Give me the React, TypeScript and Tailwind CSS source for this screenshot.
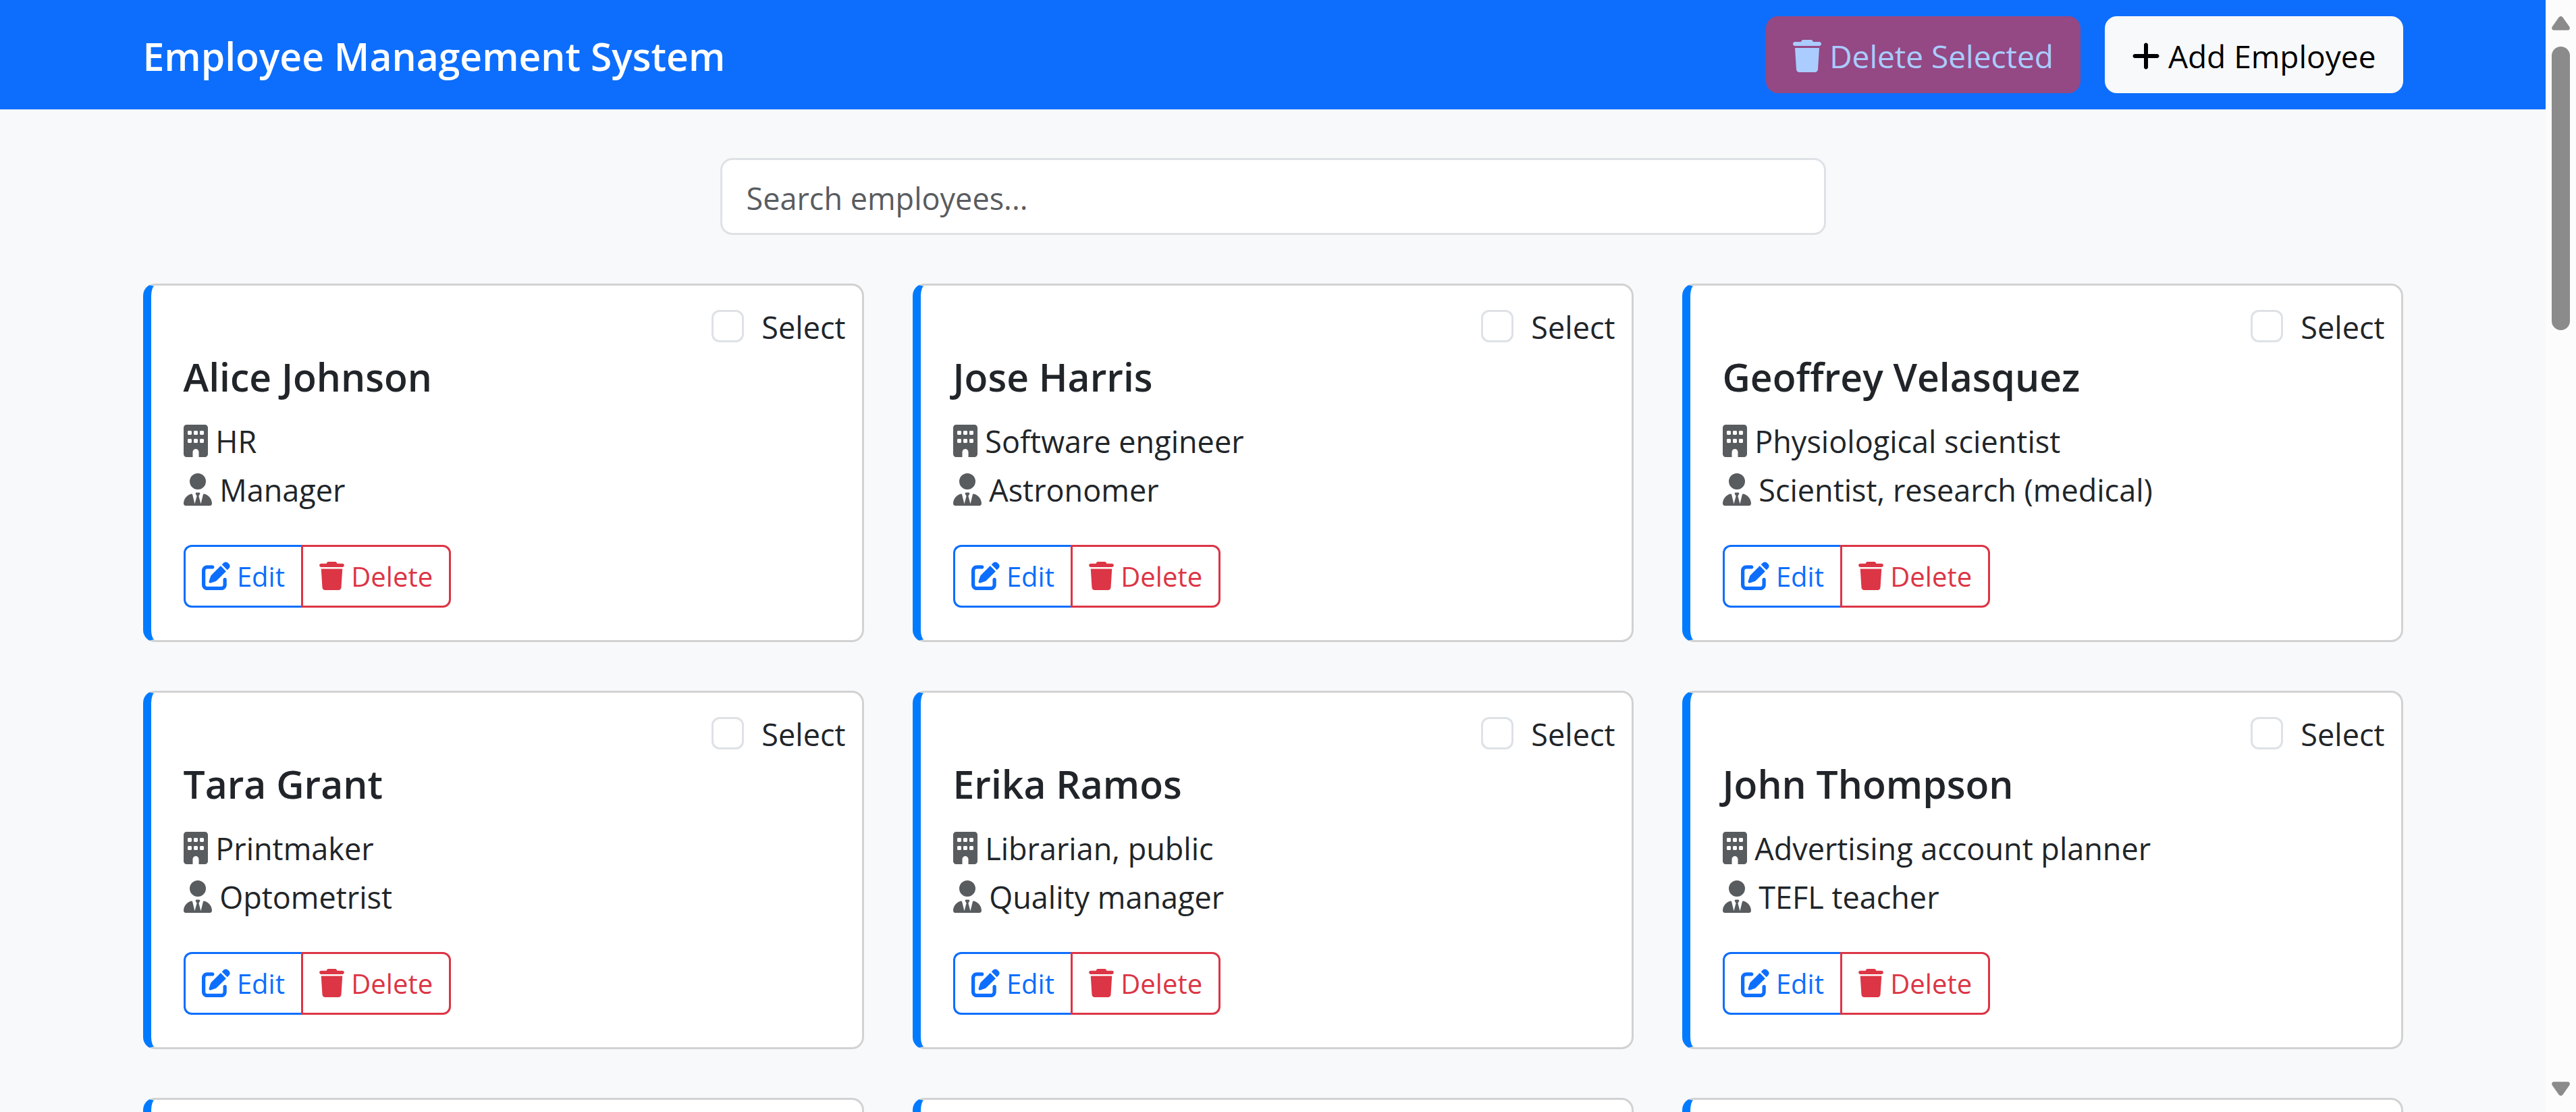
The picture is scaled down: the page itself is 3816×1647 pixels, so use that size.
import { useState } from "react";
import { FaBuilding, FaPenToSquare, FaPlus, FaTrash, FaUserTie } from "react-icons/fa6";

type Employee = { name: string; department: string; position: string };

const employees: Employee[] = [
  { name: "Alice Johnson", department: "HR", position: "Manager" },
  { name: "Jose Harris", department: "Software engineer", position: "Astronomer" },
  { name: "Geoffrey Velasquez", department: "Physiological scientist", position: "Scientist, research (medical)" },
  { name: "Tara Grant", department: "Printmaker", position: "Optometrist" },
  { name: "Erika Ramos", department: "Librarian, public", position: "Quality manager" },
  { name: "John Thompson", department: "Advertising account planner", position: "TEFL teacher" },
];

const cardFrame = "rounded-[18px] border-[3px] border-l-[12px] border-[#d2d2d2] border-l-[#007bff] bg-white";

function EmployeeCard({ employee, id }: { employee: Employee; id: number }) {
  return (
    <article className={`${cardFrame} pt-6 pb-12`}>
      <div className="flex h-[72px] items-start justify-end gap-[26px] pr-6">
        <input
          id={`select-${id}`}
          type="checkbox"
          className="mt-3 size-12 appearance-none rounded-xl border-[3px] border-[#dee2e6] bg-white checked:border-[#0d6efd] checked:bg-[#0d6efd]"
        />
        <label htmlFor={`select-${id}`} className="leading-[76px]">
          Select
        </label>
      </div>
      <div className="px-12 pt-[3px]">
        <h2 className="mb-6 text-[57px] leading-[72px] font-semibold">{employee.name}</h2>
        <p className="leading-[72px]">
          <FaBuilding className="inline-block h-12 w-9 align-[-6px] text-[#595c5f]" /> {employee.department}
        </p>
        <p className="mb-[45px] leading-[72px]">
          <FaUserTie className="inline-block h-12 w-[42px] align-[-6px] text-[#595c5f]" /> {employee.position}
        </p>
        <div className="flex text-[40px] leading-[63px]">
          <button
            type="button"
            className="rounded-l-xl border-[3px] border-r-0 border-[#0d6efd] px-6 py-3 text-[#0d6efd]"
          >
            <FaPenToSquare className="inline-block size-[42px] align-[-5px]" /> Edit
          </button>
          <button type="button" className="rounded-r-xl border-[3px] border-[#dc3545] px-6 py-3 text-[#dc3545]">
            <FaTrash className="inline-block h-[42px] w-[37px] align-[-5px]" /> Delete
          </button>
        </div>
      </div>
    </article>
  );
}

function Scrollbar() {
  return (
    <aside className="flex w-[45px] shrink-0 flex-col items-center bg-[#fcfcfc] py-6" aria-label="Scroll bar">
      <button type="button" aria-label="Scroll up">
        <svg className="h-[21px] w-[27px]" viewBox="0 0 27 21" fill="#8b8b8b">
          <path d="M10.5 1.8Q13.5 -1.6 16.5 1.8L26.2 15.5Q28.3 20.4 23.5 20.8H3.5Q-1.3 20.4 0.8 15.5Z" />
        </svg>
      </button>
      <div className="mt-6 h-[420px] w-[27px] rounded-full bg-[#8b8b8b]" />
      <button type="button" aria-label="Scroll down" className="mt-auto">
        <svg className="h-[21px] w-[27px] rotate-180" viewBox="0 0 27 21" fill="#8b8b8b">
          <path d="M10.5 1.8Q13.5 -1.6 16.5 1.8L26.2 15.5Q28.3 20.4 23.5 20.8H3.5Q-1.3 20.4 0.8 15.5Z" />
        </svg>
      </button>
    </aside>
  );
}

export default function App() {
  const [query, setQuery] = useState("");
  const shown = employees.filter((e) => e.name.toLowerCase().includes(query.toLowerCase()));

  return (
    <div className="flex h-screen overflow-hidden bg-[#f8f9fa] font-['Open_Sans','Noto_Sans',sans-serif] text-[45px] text-[#212529]">
      <div className="min-w-0 flex-1 overflow-hidden">
        <header className="bg-[#0d6efd] py-6">
          <div className="mx-auto flex max-w-[3420px] items-center justify-between px-9">
            <a href="#" className="pt-1 text-[57px] leading-[90px] font-semibold text-white">
              Employee Management System
            </a>
            <div className="flex gap-9 text-[46px] leading-[72px]">
              <button
                type="button"
                disabled
                className="rounded-[18px] border-[3px] border-[#dc3545] bg-[#dc3545] px-[37px] pt-5 pb-4 text-white opacity-65"
              >
                <FaTrash className="inline-block h-12 w-[42px] align-[-6px]" /> Delete Selected
              </button>
              <button
                type="button"
                className="rounded-[18px] border-[3px] border-[#f8f9fa] bg-[#f8f9fa] px-[37px] pt-5 pb-4 text-black"
              >
                <FaPlus className="inline-block h-12 w-[42px] align-[-6px]" /> Add Employee
              </button>
            </div>
          </div>
        </header>
        <main className="mx-auto max-w-[3420px] px-9 pt-[72px]">
          <div className="mb-[72px] flex justify-center">
            <input
              type="text"
              aria-label="Search employees"
              placeholder="Search employees..."
              value={query}
              onChange={(e) => setQuery(e.target.value)}
              className="h-[114px] w-full max-w-[1638px] rounded-[18px] border-[3px] border-[#dee2e6] bg-white px-9 pt-1 placeholder:text-[#595c5f]"
            />
          </div>
          <section className="grid grid-cols-3 gap-[72px]">
            {shown.map((employee, i) => (
              <EmployeeCard key={employee.name} employee={employee} id={i} />
            ))}
            {[0, 1, 2].map((n) => (
              <div key={n} className={`${cardFrame} h-[531px]`} />
            ))}
          </section>
        </main>
      </div>
      <Scrollbar />
    </div>
  );
}
